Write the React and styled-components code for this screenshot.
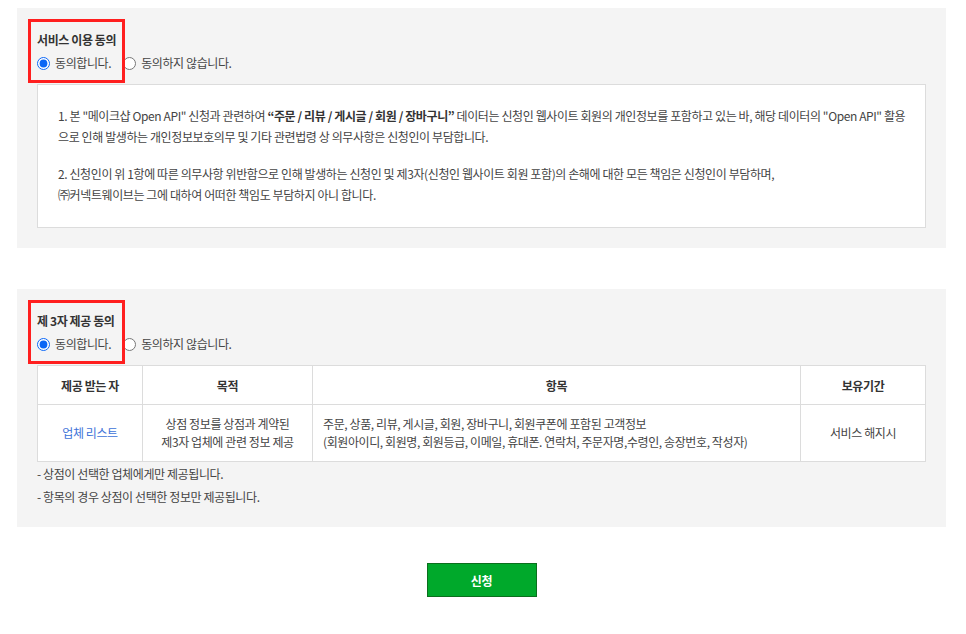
import React, { useState } from "react";
import styled, { createGlobalStyle } from "styled-components";

const GlobalStyle = createGlobalStyle`
  body {
    margin: 0;
    background: #fff;
    font-family: "Noto Sans CJK KR", "Noto Sans", sans-serif;
    color: #444;
    letter-spacing: -0.4px;
  }
`;

const Page = styled.div`
  padding: 8px 20px 30px 17px;
  display: flex;
  flex-direction: column;
`;

const Panel = styled.section`
  background: #f4f4f4;
  padding: 23px 20px ${(p) => p.$bottom || 20}px;
  margin-bottom: ${(p) => p.$gap || 0}px;
`;

const Header = styled.div`
  position: relative;
  margin-bottom: 12px;
`;

const Highlight = styled.div`
  position: absolute;
  left: -9px;
  top: -12px;
  width: 91px;
  height: 58px;
  border: 3px solid #ff1f1f;
  pointer-events: none;
`;

const Title = styled.h3`
  margin: 0 0 5px;
  font-size: 12px;
  line-height: 18px;
  font-weight: 700;
  color: #333;
`;

const RadioRow = styled.div`
  display: flex;
  align-items: center;
  gap: 12px;
`;

const RadioLabel = styled.label`
  display: flex;
  align-items: center;
  font-size: 12px;
  line-height: 18px;
  color: #444;
  cursor: pointer;

  input {
    width: 13px;
    height: 13px;
    margin: 0 5px 0 0;
    accent-color: #0b66f5;
  }
`;

const Notice = styled.div`
  background: #fff;
  border: 1px solid #dcdcdc;
  padding: 20px 20px 22px;
  font-size: 12px;
  line-height: 21px;
  color: #444;
  white-space: nowrap;

  p {
    margin: 0 0 16px;
  }
  p:last-child {
    margin: 0;
  }
  strong {
    color: #333;
  }
`;

const Table = styled.table`
  width: 100%;
  border-collapse: collapse;
  background: #fff;
  font-size: 12px;
  color: #444;

  th,
  td {
    border: 1px solid #dcdcdc;
    text-align: center;
    padding: 0;
  }
  th {
    height: 38px;
    font-weight: 700;
    color: #333;
  }
  td {
    height: 56px;
    line-height: 18px;
  }
`;

const ItemCell = styled.td`
  && {
    text-align: left;
    padding: 0 10px;
  }
`;

const VendorLink = styled.a`
  color: #3d72d8;
  text-decoration: none;
`;

const Notes = styled.ul`
  list-style: none;
  margin: 0;
  padding: 0;
  font-size: 12px;
  line-height: 23px;
  color: #444;
`;

const Actions = styled.div`
  display: flex;
  justify-content: center;
  margin-top: 36px;
`;

const SubmitButton = styled.button`
  width: 110px;
  height: 34px;
  background: #00a92b;
  border: 1px solid #0b6f1d;
  color: #fff;
  font-family: inherit;
  font-size: 12px;
  font-weight: 700;
  letter-spacing: -0.4px;
  cursor: pointer;
`;

const ConsentHeader = ({ title, name, value, onChange }) => (
  <Header>
    <Highlight />
    <Title>{title}</Title>
    <RadioRow>
      <RadioLabel>
        <input
          type="radio"
          name={name}
          checked={value === "Y"}
          onChange={() => onChange("Y")}
        />
        동의합니다.
      </RadioLabel>
      <RadioLabel>
        <input
          type="radio"
          name={name}
          checked={value === "N"}
          onChange={() => onChange("N")}
        />
        동의하지 않습니다.
      </RadioLabel>
    </RadioRow>
  </Header>
);

const App = () => {
  const [service, setService] = useState("Y");
  const [third, setThird] = useState("Y");

  return (
    <>
      <GlobalStyle />
      <Page>
        <Panel $gap={41}>
          <ConsentHeader
            title="서비스 이용 동의"
            name="service"
            value={service}
            onChange={setService}
          />
          <Notice>
            <p>
              1. 본 "메이크샵 Open API" 신청과 관련하여{" "}
              <strong>“주문 / 리뷰 / 게시글 / 회원 / 장바구니”</strong> 데이터는
              신청인 웹사이트 회원의 개인정보를 포함하고 있는 바, 해당 데이터의
              "Open API" 활용
              <br />
              으로 인해 발생하는 개인정보보호의무 및 기타 관련법령 상
              의무사항은 신청인이 부담합니다.
            </p>
            <p>
              2. 신청인이 위 1항에 따른 의무사항 위반함으로 인해 발생하는 신청인
              및 제3자(신청인 웹사이트 회원 포함)의 손해에 대한 모든 책임은
              신청인이 부담하며,
              <br />
              ㈜커넥트웨이브는 그에 대하여 어떠한 책임도 부담하지 아니 합니다.
            </p>
          </Notice>
        </Panel>

        <Panel $bottom={19}>
          <ConsentHeader
            title="제 3자 제공 동의"
            name="third"
            value={third}
            onChange={setThird}
          />
          <Table>
            <colgroup>
              <col style={{ width: 105 }} />
              <col style={{ width: 170 }} />
              <col />
              <col style={{ width: 125 }} />
            </colgroup>
            <thead>
              <tr>
                <th>제공 받는 자</th>
                <th>목적</th>
                <th>항목</th>
                <th>보유기간</th>
              </tr>
            </thead>
            <tbody>
              <tr>
                <td>
                  <VendorLink href="#">업체 리스트</VendorLink>
                </td>
                <td>
                  상점 정보를 상점과 계약된
                  <br />
                  제3자 업체에 관련 정보 제공
                </td>
                <ItemCell>
                  주문, 상품, 리뷰, 게시글, 회원, 장바구니, 회원쿠폰에 포함된
                  고객정보
                  <br />
                  (회원아이디, 회원명, 회원등급, 이메일, 휴대폰. 연락처,
                  주문자명,수령인, 송장번호, 작성자)
                </ItemCell>
                <td>서비스 해지시</td>
              </tr>
            </tbody>
          </Table>
          <Notes>
            <li>- 상점이 선택한 업체에게만 제공됩니다.</li>
            <li>- 항목의 경우 상점이 선택한 정보만 제공됩니다.</li>
          </Notes>
        </Panel>

        <Actions>
          <SubmitButton type="button">신청</SubmitButton>
        </Actions>
      </Page>
    </>
  );
};

export default App;
